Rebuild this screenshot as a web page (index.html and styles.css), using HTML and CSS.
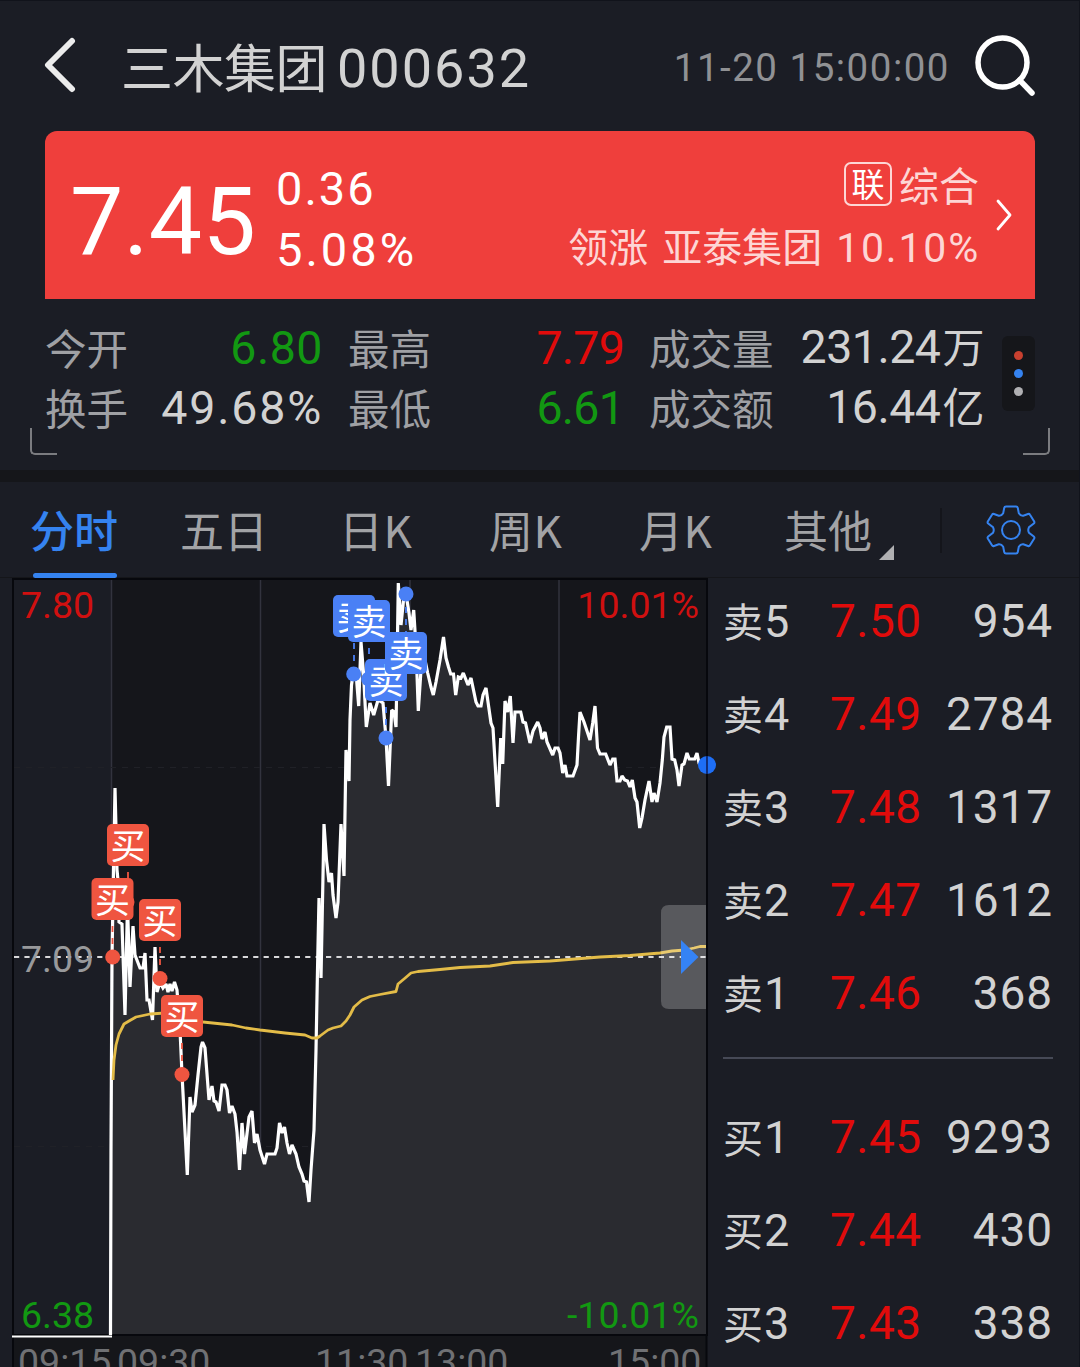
FILE: index.html
```html
<!DOCTYPE html>
<html lang="zh-CN">
<head>
    <meta charset="UTF-8">
    <meta name="viewport" content="width=device-width, initial-scale=1.0">
    <title>三木集团 000632</title>
    <link rel="stylesheet" href="styles.css">
</head>
<body>
    <header class="header">
        <svg class="back-icon" width="34" height="58" viewBox="0 0 34 58">
            <path d="M29 4 L5 28 L29 52" fill="none" stroke="#ececec" stroke-width="6" stroke-linecap="round" stroke-linejoin="round"/>
        </svg>
        <h1 class="stock-name">三木集团</h1>
        <span class="stock-code">000632</span>
        <span class="quote-time">11-20 15:00:00</span>
        <svg class="search-icon" width="64" height="64" viewBox="0 0 64 64">
            <circle cx="30.500" cy="28.500" r="24.500" fill="none" stroke="#fff" stroke-width="5.500"/>
            <path d="M47.500 46 L60 59" stroke="#fff" stroke-width="5.500" stroke-linecap="round"/>
        </svg>
    </header>

    <section class="price-card">
        <div class="price">7.45</div>
        <div class="change">
            <div class="change-value">0.36</div>
            <div class="change-percent">5.08%</div>
        </div>
        <div class="sector">
            <div class="sector-row">
                <span class="sector-tag">联</span>
                <span class="sector-name">综合</span>
            </div>
            <div class="sector-row">
                <span>领涨</span>
                <span class="leader-name">亚泰集团</span>
                <span class="leader-percent">10.10%</span>
            </div>
        </div>
        <svg class="card-arrow" width="18" height="34" viewBox="0 0 18 34">
            <path d="M3 3 L15 17 L3 31" fill="none" stroke="#fff" stroke-width="2.800" stroke-linecap="round" stroke-linejoin="round"/>
        </svg>
    </section>

    <section class="stats">
        <div class="stats-grid">
            <div class="stat"><span class="stat-label">今开</span><span class="stat-value">
                <span class="down">6.80</span></span></div>
            <div class="stat"><span class="stat-label">最高</span><span class="stat-value narrow up">7.79</span></div>
            <div class="stat"><span class="stat-label">成交量</span><span class="stat-value tight">231.24<span class="unit">万</span></span></div>
            <div class="stat"><span class="stat-label">换手</span><span class="stat-value wide">49.68%</span></div>
            <div class="stat"><span class="stat-label">最低</span><span class="stat-value narrow down">6.61</span></div>
            <div class="stat"><span class="stat-label">成交额</span><span class="stat-value tight">16.44<span class="unit">亿</span></span></div>
        </div>
        <div class="more-dots">
            <i class="dot dot-red"></i>
            <i class="dot dot-blue"></i>
            <i class="dot dot-gray"></i>
        </div>
        <i class="corner corner-left"></i>
        <i class="corner corner-right"></i>
    </section>

    <nav class="tabs">
        <a class="tab active">分时</a>
        <a class="tab">五日</a>
        <a class="tab">日K</a>
        <a class="tab">周K</a>
        <a class="tab">月K</a>
        <a class="tab tab-more">其他</a>
        <span class="tabs-divider"></span>
        <svg class="gear-icon" width="52" height="52" viewBox="-26 -26 52 52">
            <path d="M-5 -23.500 H5 Q6.500 -23.500 6.800 -22 L7.800 -16.800 Q9.500 -14 12.300 -14.300 L17 -16 Q18.300 -16.500 19 -15.300 L23.200 -8.500 Q23.800 -7.300 22.800 -6.400 L18 -2.800 Q16.500 0 18 2.800 L22.800 6.400 Q23.800 7.300 23.200 8.500 L19 15.300 Q18.300 16.500 17 16 L12.300 14.300 Q9.500 14 7.800 16.800 L6.800 22 Q6.500 23.500 5 23.500 H-5 Q-6.500 23.500 -6.800 22 L-7.800 16.800 Q-9.500 14 -12.300 14.300 L-17 16 Q-18.300 16.500 -19 15.300 L-23.200 8.500 Q-23.800 7.300 -22.800 6.400 L-18 2.800 Q-16.500 0 -18 -2.800 L-22.800 -6.400 Q-23.800 -7.300 -23.200 -8.500 L-19 -15.300 Q-18.300 -16.500 -17 -16 L-12.300 -14.300 Q-9.500 -14 -7.800 -16.800 L-6.800 -22 Q-6.500 -23.500 -5 -23.500 Z" fill="none" stroke="#3583f0" stroke-width="2"/>
            <circle r="9" fill="none" stroke="#3583f0" stroke-width="2"/>
        </svg>
    </nav>

    <main class="content">
        <svg class="chart" width="718" height="789" viewBox="0 578 718 789">
            <rect class="axis-bg" x="12" y="1336" width="695" height="31"/>
            <rect class="plot-bg" x="111" y="579" width="596" height="756"/>
            <g class="grid">
                <path d="M111.500 580 V1334 M260.500 580 V1334 M410 580 V1334 M559 580 V1334"/>
            </g>
            <path class="grid-dash" d="M14 767.500 H706 M14 1146.500 H706"/>
            <path id="area" class="area" d=""/>
            <rect class="frame" x="13" y="579" width="694" height="756"/>
            <path class="frame" d="M13 1335 V1367 M706.500 1335 V1367"/>
            <path class="baseline" d="M14 957 H706"/>
            <text class="label gray" x="21" y="972">7.09</text>
            <polyline id="priceLine" class="price-line" points=""/>
            <path class="pre-line" d="M12 1336.500 H112"/>
            <polyline class="avg-line" points="113,1080 114,1060 116,1045 119,1034 124,1024 129,1021 136,1017 150,1014 165,1013 203,1022 232,1025 246,1028 260,1030 285,1033 305,1035 312,1038 317,1038 320,1036 328,1030 333,1028 341,1026 346,1021 350,1015 354,1007 362,1000 370,996.500 380,994.500 396,991.500 398,984 404,979 411,973 418,971.500 440,969.500 460,967.500 490,966 500,964.500 513,962.500 550,961 600,957 630,955.500 660,953 672,951 685,950 694,948 700,946.500 706,946.500"/>

            <path class="handle" d="M706 905 H669 Q661 905 661 913 V1001 Q661 1009 669 1009 H706 Z"/>
            <path class="handle-arrow" d="M681 940 L698.500 957 L681 974 Z"/>

            <text class="label up" x="21" y="618">7.80</text>
            <text class="label down" x="21" y="1328">6.38</text>
            <text class="label up end" x="699" y="618">10.01%</text>
            <text class="label down end" x="699" y="1328">-10.01%</text>
            <text class="label time" x="18" y="1375">09:15</text>
            <text class="label time" x="117" y="1375">09:30</text>
            <text class="label time" x="315" y="1375">11:30</text>
            <text class="label time" x="415" y="1375">13:00</text>
            <text class="label time" x="608" y="1375">15:00</text>

            <g id="markers"></g>
            <circle class="last-dot" cx="707" cy="765" r="9"/>
            <path class="last-cut" d="M707 756 V774"/>
        </svg>

        <div class="order-book">
            <div class="order"><span class="order-name">卖<b>5</b></span><span class="order-price">7.50</span><span class="order-volume">954</span></div>
            <div class="order"><span class="order-name">卖<b>4</b></span><span class="order-price">7.49</span><span class="order-volume">2784</span></div>
            <div class="order"><span class="order-name">卖<b>3</b></span><span class="order-price">7.48</span><span class="order-volume">1317</span></div>
            <div class="order"><span class="order-name">卖<b>2</b></span><span class="order-price">7.47</span><span class="order-volume">1612</span></div>
            <div class="order"><span class="order-name">卖<b>1</b></span><span class="order-price">7.46</span><span class="order-volume">368</span></div>
            <div class="order-divider"></div>
            <div class="order"><span class="order-name">买<b>1</b></span><span class="order-price">7.45</span><span class="order-volume">9293</span></div>
            <div class="order"><span class="order-name">买<b>2</b></span><span class="order-price">7.44</span><span class="order-volume">430</span></div>
            <div class="order"><span class="order-name">买<b>3</b></span><span class="order-price">7.43</span><span class="order-volume">338</span></div>
        </div>
    </main>
    <script src="chart.js"></script>
</body>
</html>
```
FILE: styles.css
```css
* {
    box-sizing: border-box;
}
body {
    margin: 0;
    width: 1080px;
    height: 1367px;
    overflow: hidden;
    background-color: #1b1d25;
    border-top: 1px solid #11131b;
    border-right: 1px solid #11131b;
    color: #d2d2d2;
    font-family: Roboto, "Noto Sans CJK SC", sans-serif;
}

/* header */
.header {
    display: flex;
    align-items: center;
    height: 130px;
    padding: 0 43px 0 43px;
}
.back-icon {
    margin-right: 44px;
}
.stock-name {
    margin: 0;
    padding-top: 9px;
    font-size: 52px;
    font-weight: 400;
    line-height: 60px;
    letter-spacing: -0.5px;
}
.stock-code {
    margin-left: 10px;
    padding-top: 6px;
    font-size: 54px;
    line-height: 60px;
    letter-spacing: 2px;
}
.quote-time {
    margin-left: auto;
    padding-top: 3px;
    color: #909194;
    font-size: 38.5px;
    letter-spacing: 1.5px;
}
.search-icon {
    margin: 0 0 0 22px;
}

/* price card */
.price-card {
    display: flex;
    align-items: center;
    height: 168px;
    margin: 0 44px 0 45px;
    padding: 0 22px 0 25px;
    border-radius: 12px 12px 0 0;
    background-color: #ef3f3c;
    color: #fff;
}
.price {
    width: 206px;
    padding-top: 12px;
    font-size: 95px;
    letter-spacing: 0.2px;
}
.change {
    font-size: 47px;
    line-height: 61px;
    padding-top: 7px;
}
.change-value {
    letter-spacing: 2px;
}
.change-percent {
    letter-spacing: 3px;
}
.sector {
    margin-left: auto;
    color: #fdd6d5;
    font-size: 40px;
}
.sector-row {
    display: flex;
    align-items: center;
    justify-content: flex-end;
    height: 61px;
}
.sector-row span {
    margin-top: -2px;
}
.sector-row .sector-tag {
    width: 48px;
    height: 44px;
    margin-right: 7px;
    border: 2px solid #fdd6d5;
    border-radius: 7px;
    color: #fff;
    font-size: 33px;
    line-height: 44px;
    text-align: center;
}
.leader-name {
    margin: 0 14px;
}
.sector-row .leader-percent {
    margin: 4px -1px 0 0;
    font-size: 41px;
    letter-spacing: 1.8px;
}
.card-arrow {
    margin-left: 16px;
}

/* stats */
.stats {
    position: relative;
    display: flex;
    height: 171px;
    padding: 19px 44px 0 45px;
}
.stats-grid {
    display: grid;
    grid-template-columns: 278px 276px 335px;
    grid-auto-rows: 60px;
    column-gap: 25px;
}
.stat {
    display: flex;
    align-items: center;
    justify-content: space-between;
}
.stat-label {
    padding-top: 5px;
    color: #9fa0a4;
    font-size: 41.5px;
    line-height: 60px;
}
.stat-value {
    font-size: 46.5px;
    line-height: 60px;
    letter-spacing: 0.5px;
}
.stat-value.narrow {
    letter-spacing: -0.8px;
}
.stat-value.tight {
    letter-spacing: -0.5px;
}
.stat-value.wide {
    letter-spacing: 1.8px;
}
.unit {
    margin-left: 2px;
    font-size: 42px;
}
.up {
    color: #e10b0b;
    fill: #d01010;
}
.down {
    color: #129812;
    fill: #129812;
}
.more-dots {
    display: flex;
    flex-direction: column;
    align-items: center;
    justify-content: center;
    gap: 9px;
    width: 33px;
    height: 75px;
    margin: 18px 0 0 18px;
    border-radius: 6px;
    background-color: #15161a;
}
.dot {
    width: 9px;
    height: 9px;
    border-radius: 50%;
}
.dot-red {
    background-color: #c8402f;
}
.dot-blue {
    background-color: #3583f0;
}
.dot-gray {
    background-color: #b0b0b3;
}
.corner {
    position: absolute;
    top: 129px;
    width: 27px;
    height: 27px;
    border-bottom: 2px solid #7b7c80;
}
.corner-left {
    left: 30px;
    border-left: 2px solid #7b7c80;
    border-bottom-left-radius: 5px;
}
.corner-right {
    right: 29px;
    border-right: 2px solid #7b7c80;
    border-bottom-right-radius: 5px;
}

/* tabs */
.tabs {
    display: flex;
    align-items: center;
    height: 108px;
    padding: 0 42px 0 30px;
    border-top: 12px solid #15161a;
    box-shadow: inset 0 -1px #15161a;
    color: #a2a3a6;
    font-family: "Noto Sans CJK SC", sans-serif;
    font-size: 44px;
}
.tab {
    position: relative;
    width: 150px;
    height: 96px;
    line-height: 94px;
    white-space: nowrap;
}
.tab:nth-child(3), .tab:nth-child(4), .tab:nth-child(5) {
    padding-left: 9px;
    letter-spacing: 0.5px;
}
.tab.active {
    color: #3583f0;
    font-weight: 500;
}
.tab.active::after {
    content: "";
    position: absolute;
    left: 3px;
    bottom: 0;
    width: 84px;
    height: 5px;
    border-radius: 3px;
    background-color: #3583f0;
}
.tab-more {
    width: 160px;
    padding-left: 4px;
}
.tab-more::after {
    content: "";
    position: absolute;
    left: 99px;
    bottom: 18px;
    border-left: 15px solid transparent;
    border-bottom: 15px solid #b0b0b2;
}
.tabs-divider {
    width: 2px;
    height: 45px;
    background-color: #14151b;
}
.gear-icon {
    margin-left: auto;
}

/* chart */
.content {
    display: flex;
}
.chart {
    display: block;
    flex: none;
}
.plot-bg {
    fill: #15161b;
}
.axis-bg {
    fill: #15161a;
}
.grid {
    fill: none;
    stroke: #32333e;
    stroke-width: 1.5;
}
.grid-dash {
    stroke: #202127;
    stroke-width: 1.2;
    stroke-dasharray: 6 6;
}
.area {
    fill: #2a2b30;
}
.frame {
    fill: none;
    stroke: #07080d;
    stroke-width: 2;
}
.baseline {
    stroke: #d8d8da;
    stroke-width: 2;
    stroke-dasharray: 5.200 5.200;
}
.price-line {
    fill: none;
    stroke: #fff;
    stroke-width: 3.2;
    stroke-miterlimit: 2;
}
.pre-line {
    stroke: #fff;
    stroke-width: 1.8;
}
.avg-line {
    fill: none;
    stroke: #e3bc48;
    stroke-width: 2.8;
    stroke-linejoin: round;
}
.handle {
    fill: #fff;
    fill-opacity: 0.22;
}
.handle-arrow {
    fill: #3583f5;
}
.label {
    font-size: 37.5px;
}
.label.end {
    text-anchor: end;
    letter-spacing: 0;
}
.gray {
    fill: #98999b;
}
.time {
    fill: #707174;
}
.marker-text {
    fill: #fff;
    font-size: 35px;
    text-anchor: middle;
}
.buy {
    fill: #ef5540;
    stroke: #ef5540;
}
.sell {
    fill: #4a80f5;
    stroke: #4a80f5;
}
.marker-box, .marker-dot {
    stroke: none;
}
.marker-stem {
    fill: none;
    stroke-width: 1.8;
    stroke-dasharray: 6 6;
}
.last-dot {
    fill: #1e6ef5;
}
.last-cut {
    stroke: #0c1a50;
    stroke-width: 1.5;
}

/* order book */
.order-book {
    width: 335px;
    padding-left: 5px;
}
.order {
    display: flex;
    align-items: center;
    height: 93px;
    font-size: 46px;
    line-height: 60px;
    padding-bottom: 7px;
}
.order-name {
    width: 107px;
    padding-top: 4px;
    font-size: 40px;
}
.order-name b {
    margin-left: 1px;
    font-size: 45px;
    font-weight: 400;
}
.order-price {
    width: 95px;
    color: #e10b0b;
    letter-spacing: 0.5px;
}
.order-volume {
    flex: 1;
    text-align: right;
    letter-spacing: 0.9px;
}
.order-divider {
    width: 330px;
    height: 2px;
    margin: 14px 0 35px;
    background-color: #464956;
}
```
FILE: chart.js
```js
const prices = [
    [110.5, 1335], [111, 1150], [112, 957], [113, 900], [115, 788], [117, 870], [118, 880], [119, 922], [122, 924],
    [125, 1015], [127.5, 905], [130, 987], [133, 926], [135, 955], [140, 968], [143, 968], [145, 953], [147, 1000],
    [149, 1000], [152.5, 1020], [155, 947], [157, 992], [160, 982], [163, 988], [166, 984], [168, 992], [170, 984],
    [172, 991], [174.5, 982], [177, 990], [180, 1030], [182, 1074], [187.3, 1175], [190, 1097], [192, 1112], [195, 1105],
    [198, 1075], [201, 1047], [202.5, 1042], [205, 1048], [209, 1100], [212, 1086], [214, 1101], [216, 1102], [219, 1111],
    [222, 1085], [225, 1085], [227, 1090], [229.5, 1113], [232, 1106], [235, 1114], [237, 1132], [239.5, 1170],
    [242, 1123], [244.5, 1154], [249, 1117], [252, 1111], [254.5, 1143], [257, 1134], [260, 1150], [264.5, 1164],
    [267, 1154], [275, 1154], [277, 1148], [279.5, 1123], [282, 1133], [284.5, 1127], [287, 1143], [289.5, 1154],
    [292, 1145], [296, 1154], [299, 1167], [302, 1174], [304, 1181], [306.5, 1182], [309, 1202], [311, 1170],
    [314, 1130], [316, 1050], [317.5, 970], [319, 898], [321, 978], [324, 824], [326.5, 860], [329, 882], [331.5, 873],
    [333, 895], [336, 918], [338, 902], [341, 824], [344, 876], [346, 750], [349, 781], [350, 720], [351.5, 685],
    [353, 674], [356, 672], [358.7, 706], [361, 642], [363.5, 673], [366.3, 727], [370, 703], [373.7, 715], [378, 700],
    [383, 703], [386, 738], [388.5, 786], [391.7, 710], [394, 712], [396, 727], [397, 670], [398.3, 583], [401, 625],
    [403.5, 600], [406, 594], [409, 613], [411, 630], [413.7, 610], [416, 647], [418.3, 711], [421, 670], [425, 660],
    [427.7, 673], [431, 687], [433.3, 695], [436, 682], [440, 660], [443.5, 637], [446, 658], [448.5, 667], [450.7, 674],
    [453.5, 674], [455.7, 695], [458.3, 677], [461, 678], [463.3, 673], [468, 685], [471, 678], [476, 702], [478, 706],
    [481, 706], [483, 695], [486, 688], [488, 702], [491, 723], [493, 728], [497.7, 807], [500.7, 738], [502.7, 764],
    [505, 701], [507.7, 712], [510.3, 696], [513, 743], [515, 712], [520.7, 712], [523, 722], [525.5, 723], [530, 743],
    [533, 731], [537.7, 722], [540, 728], [542, 739], [545, 732], [547, 742], [552.7, 755], [555, 748], [558, 748],
    [560, 753], [562.7, 773], [565, 765], [567, 776], [573, 776], [577, 765], [578.5, 737], [580, 712], [584, 722],
    [590, 740], [592.7, 723], [595, 706], [597.5, 748], [600, 754], [605.7, 754], [610, 765], [612.7, 759], [615, 759],
    [617, 781], [620, 781], [622, 776], [624.7, 780], [627.5, 781], [630, 787], [632.3, 780], [635, 798], [637, 802],
    [639.7, 828], [642, 818], [645, 800], [649, 781], [652, 802], [654, 793], [657, 802], [660, 783], [662.3, 760],
    [664, 737], [666.7, 727], [670, 727], [672, 759], [674.7, 760], [677, 770], [679, 786], [682, 765], [684, 764],
    [687, 753], [689.3, 759], [694.7, 759], [697, 753], [699, 763], [706, 765]
];

// x/y is the box corner, dot is the traded point on the line
const trades = [
    { type: 'buy', x: 107, y: 824, dot: [127, 902] },
    { type: 'buy', x: 91.5, y: 878, dot: [112.7, 957] },
    { type: 'buy', x: 139, y: 899, dot: [160, 978.5] },
    { type: 'buy', x: 161, y: 995, dot: [182, 1074.5] },
    { type: 'sell', x: 333, y: 595, dot: [353.7, 674] },
    { type: 'sell', x: 348, y: 600, dot: [368.7, 679] },
    { type: 'sell', x: 365, y: 659, dot: [386, 738] },
    { type: 'sell', x: 385, y: 632, dot: [406, 594] }
];

const points = prices.map(p => p.join(',')).join(' ');
document.getElementById('priceLine').setAttribute('points', points);
document.getElementById('area').setAttribute('d', 'M' + points + ' L706,1335 Z');

let html = '';
trades.forEach(t => {
    const cx = t.x + 21;
    const stem = t.dot[1] > t.y ? `M${cx} ${t.y + 48} V${t.dot[1] - 8}` : `M${cx} ${t.dot[1] + 13} V${t.y}`;
    html += `
        <g class="${t.type}">
            <path class="marker-stem" d="${stem}"/>
            <circle class="marker-dot" cx="${t.dot[0]}" cy="${t.dot[1]}" r="7.5"/>
            <rect class="marker-box" x="${t.x}" y="${t.y}" width="42" height="42" rx="5"/>
            <text class="marker-text" stroke="none" x="${cx}" y="${t.y + 35}">${t.type === 'buy' ? '买' : '卖'}</text>
        </g>`;
});
document.getElementById('markers').innerHTML = html;
```
